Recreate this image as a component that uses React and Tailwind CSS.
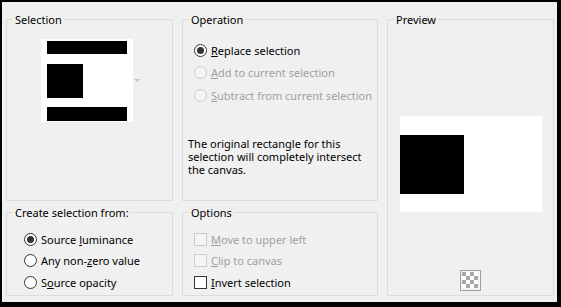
import { Fragment } from "react";

const FONT = { fontFamily: '"Noto Sans", "Open Sans", sans-serif' };

function Group({ title, className = "", children }) {
  return (
    <fieldset className={`border border-[#dcdcdc] min-w-0 ${className}`}>
      <legend className="ml-[6px] px-[2px] text-[11px] leading-[15px] text-black">{title}</legend>
      {children}
    </fieldset>
  );
}

function Label({ text, mn, disabled }) {
  const i = text.indexOf(mn);
  return (
    <span className={`text-[11px] leading-[15px] whitespace-nowrap ${disabled ? "text-[#a0a0a0]" : "text-black"}`}>
      {text.slice(0, i)}
      <u>{text.slice(i, i + 1)}</u>
      {text.slice(i + 1)}
    </span>
  );
}

function Radio({ checked, disabled }) {
  return (
    <span
      className={`w-[13px] h-[13px] rounded-full border flex items-center justify-center shrink-0 ${
        disabled ? "border-[#cccccc] bg-[#f5f5f5]" : "border-[#333333] bg-white"
      }`}
    >
      {checked && <span className="w-[7px] h-[7px] rounded-full bg-[#333333]" />}
    </span>
  );
}

function Check({ disabled }) {
  return (
    <span
      className={`w-[13px] h-[13px] border shrink-0 ${
        disabled ? "border-[#cccccc] bg-[#f5f5f5]" : "border-[#333333] bg-white"
      }`}
    />
  );
}

function Row({ control, h, ...label }) {
  return (
    <div className={`flex items-center gap-[4px] ${h}`}>
      {control}
      <Label {...label} />
    </div>
  );
}

function Checker() {
  const cells = [];
  for (let r = 0; r < 4; r++)
    for (let c = 0; c < 4; c++)
      if ((r + c) % 2 === 0) cells.push(<rect key={`${r}-${c}`} x={2 + c * 4} y={2 + r * 4} width="4" height="4" fill="#a8a8a8" />);
  return (
    <svg width="21" height="21" viewBox="0 0 21 21">
      <rect x="0.5" y="0.5" width="20" height="20" fill="#f4f4f4" stroke="#a0a0a0" />
      <rect x="2" y="2" width="16" height="16" fill="#ffffff" />
      {cells}
    </svg>
  );
}

export default function App() {
  return (
    <div className="w-[561px] h-[307px] bg-black pt-[2px] pl-[2px] pr-[4px] pb-[5px]" style={FONT}>
      <div className="w-full h-full bg-[#f0f0f0] pt-[10px] pl-[4px]">
        <div className="grid grid-cols-[167px_196px_167px] grid-rows-[189px_91px] gap-x-[9px] gap-y-[4px]">
          {/* Selection */}
          <Group title="Selection">
            <div className="flex items-center mt-[12px] ml-[34px] gap-[1px]">
              <div className="w-[92px] h-[83px] bg-white pt-[2px] px-[6px] flex flex-col">
                <div className="h-[13px] bg-black" />
                <div className="h-[34px] w-[36px] bg-black mt-[10px]" />
                <div className="h-[14px] bg-black mt-[9px]" />
              </div>
              <svg width="6" height="4" viewBox="0 0 6 4">
                <path d="M0 0 H6 L3 3 Z" fill="#c4c4c4" />
              </svg>
            </div>
          </Group>

          {/* Operation */}
          <Group title="Operation">
            <div className="pl-[11px] mt-[12px]">
              <Row h="h-[22.5px]" control={<Radio checked />} text="Replace selection" mn="R" />
              <Row h="h-[22.5px]" control={<Radio disabled />} text="Add to current selection" mn="A" disabled />
              <Row h="h-[22.5px]" control={<Radio disabled />} text="Subtract from current selection" mn="S" disabled />
            </div>
            <p className="pl-[5px] mt-[30px] text-[11px] leading-[13px] text-black whitespace-nowrap">
              The original rectangle for this
              <br />
              selection will completely intersect
              <br />
              the canvas.
            </p>
          </Group>

          {/* Preview */}
          <Group title="Preview" className="row-span-2">
            <div className="flex flex-col items-center">
              <div className="w-[142px] h-[96px] bg-white mt-[89px] pt-[19px]">
                <div className="w-[64px] h-[59px] bg-black" />
              </div>
              <div className="mt-[58px]">
                <Checker />
              </div>
            </div>
          </Group>

          {/* Create selection from */}
          <Group title="Create selection from:">
            <div className="pl-[17px] mt-[9px]">
              <Row h="h-[21.3px]" control={<Radio checked />} text="Source luminance" mn="l" />
              <Row h="h-[21.3px]" control={<Radio />} text="Any non-zero value" mn="z" />
              <Row h="h-[21.3px]" control={<Radio />} text="Source opacity" mn="o" />
            </div>
          </Group>

          {/* Options */}
          <Group title="Options">
            <div className="pl-[11px] mt-[9px]">
              <Row h="h-[21.3px]" control={<Check disabled />} text="Move to upper left" mn="M" disabled />
              <Row h="h-[21.3px]" control={<Check disabled />} text="Clip to canvas" mn="C" disabled />
              <Row h="h-[21.3px]" control={<Check />} text="Invert selection" mn="I" />
            </div>
          </Group>
        </div>
      </div>
    </div>
  );
}
